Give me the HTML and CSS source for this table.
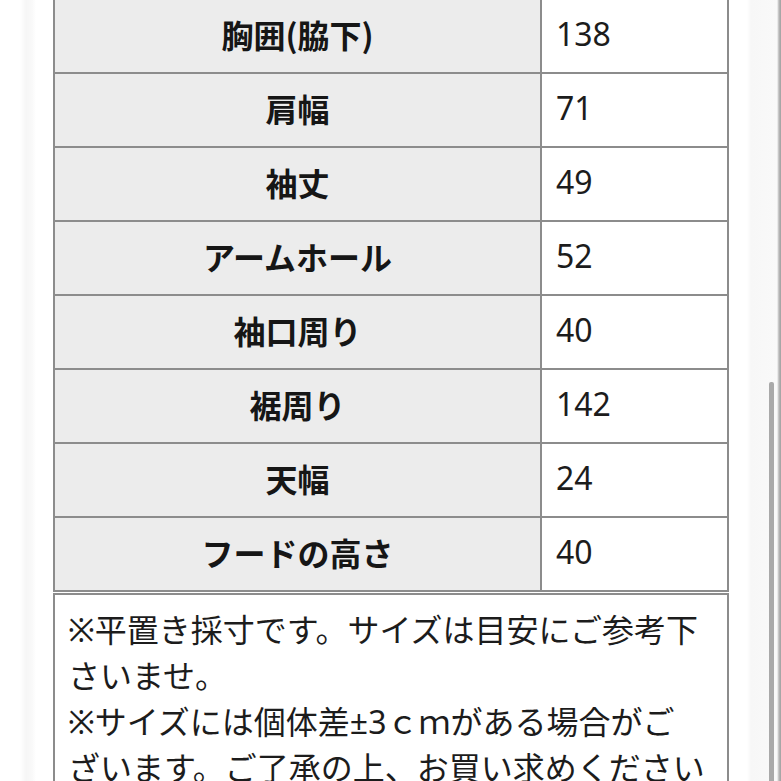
FILE: index.html
```html
<!DOCTYPE html>
<html lang="ja">
<head>
<meta charset="utf-8">
<link rel="stylesheet" href="styles.css">
</head>
<body>
<div class="page">
  <div class="side side-left"></div>
  <main class="content">
    <table class="size-table">
      <tbody>
        <tr><th>胸囲(脇下)</th><td>138</td></tr>
        <tr><th>肩幅</th><td>71</td></tr>
        <tr><th>袖丈</th><td>49</td></tr>
        <tr><th>アームホール</th><td>52</td></tr>
        <tr><th>袖口周り</th><td>40</td></tr>
        <tr><th>裾周り</th><td>142</td></tr>
        <tr><th>天幅</th><td>24</td></tr>
        <tr><th>フードの高さ</th><td>40</td></tr>
      </tbody>
    </table>
    <div class="note">
      <p>※平置き採寸です。サイズは目安にご参考下さいませ。</p>
      <p>※サイズには個体差±3ｃｍがある場合がご<br>ざいます。ご了承の上、お買い求めくださいませ。</p>
    </div>
  </main>
  <div class="side side-right">
    <div class="scroll-thumb"></div>
  </div>
</div>
</body>
</html>
```

FILE: styles.css
```css
html, body {
  margin: 0;
  padding: 0;
  background: #ffffff;
  overflow: hidden;
}

.page {
  display: flex;
  width: 781px;
  height: 781px;
  overflow: hidden;
  font-family: "Noto Sans", "Noto Sans CJK JP", sans-serif;
  color: #1c1c1c;
}

.side-left {
  width: 53px;
  flex: none;
  background: linear-gradient(to right, #ffffff 0, #ffffff 20px, #f6f6f6 26px, #f9f9f9 32px, #ffffff 36px);
}

.content {
  width: 676px;
  flex: none;
  display: flex;
  flex-direction: column;
  gap: 1px;
}

.size-table {
  width: 676px;
  border-collapse: collapse;
  margin-top: -2px;
  table-layout: fixed;
}

.size-table th,
.size-table td {
  border: 2px solid #8c8c8c;
  height: 74px;
  padding: 0 0 4px 0;
  box-sizing: border-box;
  font-size: 32px;
  line-height: 1;
}

.size-table th {
  width: 487px;
  background: #ececec;
  font-weight: 700;
  text-align: center;
  font-family: "Noto Sans CJK JP", sans-serif;
  color: #161616;
}

.size-table td {
  background: #ffffff;
  text-align: left;
  padding-left: 14px;
  font-weight: 400;
}

.note {
  border: 2px solid #8c8c8c;
  border-bottom: none;
  padding: 12px 13px 0 13px;
  font-size: 32px;
  line-height: 46px;
  font-family: "Noto Sans", "Noto Sans CJK JP", sans-serif;
  flex: 1;
}

.note p {
  margin: 0;
}

.side-right {
  flex: 1;
  position: relative;
  background: linear-gradient(to right, #ffffff 0, #ffffff 18px, #f7f7f7 22px, #f9f9f9 48px, #b8b8b8 50px, #a0a0a0 52px);
}

.scroll-thumb {
  position: absolute;
  left: 40px;
  top: 382px;
  width: 5px;
  height: 420px;
  background: #a9a9a9;
  border-radius: 2px;
}
```
